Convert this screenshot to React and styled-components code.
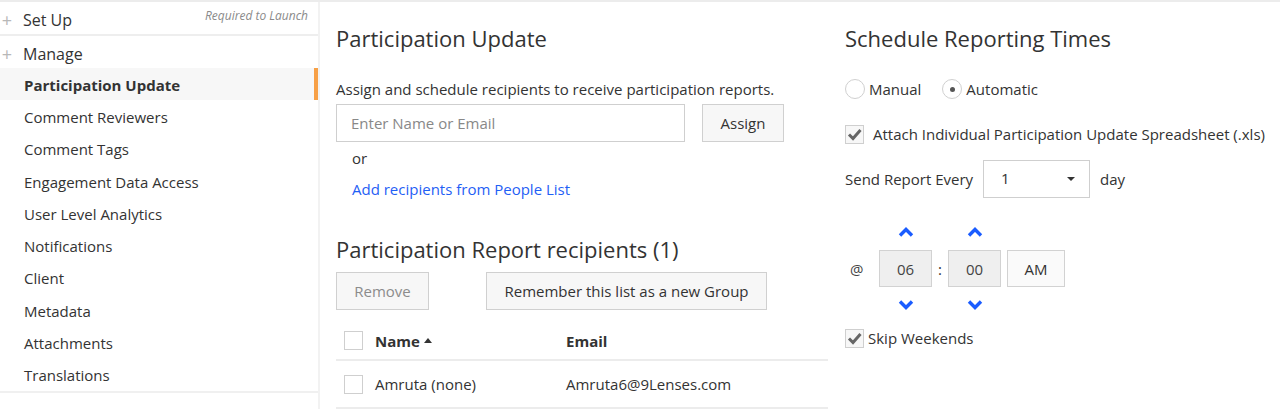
import styled, { createGlobalStyle } from "styled-components";

const GlobalStyle = createGlobalStyle`
  html, body {
    margin: 0;
    padding: 0;
    background: #fff;
  }
  body {
    font-family: "Open Sans", "Noto Sans", sans-serif;
    color: #333;
  }
`;

const navItems = [
  "Comment Reviewers",
  "Comment Tags",
  "Engagement Data Access",
  "User Level Analytics",
  "Notifications",
  "Client",
  "Metadata",
  "Attachments",
  "Translations",
];

function Chevron({ up }) {
  return (
    <svg width="16" height="10" viewBox="0 0 16 10">
      <polyline
        points={up ? "2,8.5 8,2.5 14,8.5" : "2,1.5 8,7.5 14,1.5"}
        fill="none"
        stroke="#1a5cff"
        strokeWidth="3.4"
      />
    </svg>
  );
}

function Check() {
  return (
    <svg width="15" height="13" viewBox="0 0 15 13">
      <polyline
        points="2,6.5 6,10.5 13.5,2"
        fill="none"
        stroke="#666"
        strokeWidth="3"
      />
    </svg>
  );
}

export default function App() {
  return (
    <>
      <GlobalStyle />
      <Page>
        <Sidebar>
          <SectionRow $border>
            <Plus>+</Plus>
            <SectionTitle>Set Up</SectionTitle>
            <Required>Required to Launch</Required>
          </SectionRow>
          <SectionRow>
            <Plus>+</Plus>
            <SectionTitle>Manage</SectionTitle>
          </SectionRow>
          <NavList>
            <NavItem $active>Participation Update</NavItem>
            {navItems.map((label) => (
              <NavItem key={label}>{label}</NavItem>
            ))}
          </NavList>
        </Sidebar>

        <Main>
          <Heading>Participation Update</Heading>
          <Description>
            Assign and schedule recipients to receive participation reports.
          </Description>
          <AssignRow>
            <TextInput placeholder="Enter Name or Email" />
            <Button $width="82px">Assign</Button>
          </AssignRow>
          <Or>or</Or>
          <Link href="#">Add recipients from People List</Link>

          <Heading $top="35px">Participation Report recipients (1)</Heading>
          <ButtonRow>
            <Button $width="93px" $disabled>
              Remove
            </Button>
            <Button $width="281px">Remember this list as a new Group</Button>
          </ButtonRow>

          <Table>
            <HeadRow>
              <NameCell>
                <Box />
                <HeadText>Name</HeadText>
                <SortCaret />
              </NameCell>
              <HeadText>Email</HeadText>
            </HeadRow>
            <BodyRow>
              <NameCell>
                <Box />
                <span>Amruta (none)</span>
              </NameCell>
              <span>Amruta6@9Lenses.com</span>
            </BodyRow>
          </Table>
        </Main>

        <Schedule>
          <Heading>Schedule Reporting Times</Heading>
          <RadioRow>
            <RadioLabel>
              <Radio />
              Manual
            </RadioLabel>
            <RadioLabel>
              <Radio $checked />
              Automatic
            </RadioLabel>
          </RadioRow>
          <CheckRow $gap="9px" $top="25px">
            <Box $checked>
              <Check />
            </Box>
            Attach Individual Participation Update Spreadsheet (.xls)
          </CheckRow>
          <EveryRow>
            Send Report Every
            <Select>
              <span>1</span>
              <Caret />
            </Select>
            day
          </EveryRow>

          <TimeRow>
            <At>@</At>
            <Spinner>
              <Chevron up />
              <TimeBox>06</TimeBox>
              <Chevron />
            </Spinner>
            <Colon>:</Colon>
            <Spinner>
              <Chevron up />
              <TimeBox>00</TimeBox>
              <Chevron />
            </Spinner>
            <AmBox>AM</AmBox>
          </TimeRow>

          <CheckRow $gap="4px" $top="18px">
            <Box $checked>
              <Check />
            </Box>
            Skip Weekends
          </CheckRow>
        </Schedule>
      </Page>
    </>
  );
}

// ── Layout ────────────────────────────────────────────────────────────────────

const Page = styled.div`
  display: flex;
  height: 409px;
  border-top: 2px solid #ececec;
  box-sizing: border-box;
  overflow: hidden;
`;

// ── Sidebar ───────────────────────────────────────────────────────────────────

const Sidebar = styled.aside`
  width: 318px;
  flex-shrink: 0;
  border-right: 2px solid #f2f2f2;
  align-self: stretch;
`;

const SectionRow = styled.div`
  display: flex;
  align-items: center;
  height: 29px;
  padding-top: 3px;
  border-bottom: ${({ $border }) => ($border ? "2px solid #eeeeee" : "none")};
  position: relative;
`;

const Plus = styled.span`
  width: 14px;
  text-align: center;
  margin-right: 9px;
  font-size: 18px;
  color: #b8b8b8;
  line-height: 1;
`;

const SectionTitle = styled.span`
  font-size: 16px;
  color: #333;
`;

const Required = styled.span`
  position: absolute;
  right: 10px;
  top: 5px;
  font-size: 12px;
  font-style: italic;
  color: #8a8a8a;
`;

const NavList = styled.div`
  display: flex;
  flex-direction: column;
  border-bottom: 2px solid #f0f0f0;
`;

const NavItem = styled.div`
  height: 32.3px;
  display: flex;
  align-items: center;
  padding-left: 24px;
  padding-top: 1px;
  font-size: 15px;
  font-weight: ${({ $active }) => ($active ? 700 : 400)};
  color: #333;
  background: ${({ $active }) => ($active ? "#f7f7f7" : "transparent")};
  border-right: 4px solid ${({ $active }) => ($active ? "#f7a046" : "transparent")};
  box-sizing: border-box;
`;

// ── Main column ───────────────────────────────────────────────────────────────

const Main = styled.main`
  width: 492px;
  margin-left: 16px;
  flex-shrink: 0;
  display: flex;
  flex-direction: column;
  align-items: flex-start;
`;

const Heading = styled.h2`
  margin: ${({ $top }) => $top || "21px"} 0 0;
  font-size: 22px;
  font-weight: 400;
  line-height: 30px;
  color: #333;
`;

const Description = styled.p`
  margin: 26px 0 0;
  font-size: 15px;
  line-height: 20px;
`;

const AssignRow = styled.div`
  display: flex;
  gap: 17px;
  margin-top: 5px;
`;

const TextInput = styled.input`
  width: 349px;
  height: 38px;
  box-sizing: border-box;
  border: 1px solid #cfcfcf;
  padding: 0 14px;
  font-family: inherit;
  font-size: 15px;
  color: #333;
  outline: none;

  &::placeholder {
    color: #888;
  }
`;

const Button = styled.button`
  width: ${({ $width }) => $width};
  height: 38px;
  box-sizing: border-box;
  border: 1px solid #d0d0d0;
  background: #f7f7f7;
  font-family: inherit;
  font-size: 15px;
  color: ${({ $disabled }) => ($disabled ? "#8c8c8c" : "#333")};
  padding: 0;
`;

const Or = styled.div`
  margin: 6px 0 0 16px;
  font-size: 15px;
  line-height: 20px;
`;

const Link = styled.a`
  margin: 11px 0 0 16px;
  font-size: 15px;
  line-height: 20px;
  color: #1f60f5;
  text-decoration: none;
`;

const ButtonRow = styled.div`
  display: flex;
  gap: 57px;
  margin-top: 8px;
`;

const Table = styled.div`
  align-self: stretch;
  margin-top: 12px;
  font-size: 15px;
`;

const HeadRow = styled.div`
  display: flex;
  align-items: center;
  height: 37px;
  border-bottom: 2px solid #ececec;
`;

const BodyRow = styled.div`
  display: flex;
  align-items: center;
  height: 46px;
  border-bottom: 2px solid #ececec;
`;

const NameCell = styled.div`
  width: 230px;
  display: flex;
  align-items: center;
  padding-left: 8px;
  box-sizing: border-box;
  gap: 12px;
`;

const HeadText = styled.span`
  font-weight: 700;
`;

const SortCaret = styled.span`
  width: 0;
  height: 0;
  margin-left: -8px;
  border-left: 4px solid transparent;
  border-right: 4px solid transparent;
  border-bottom: 5px solid #333;
`;

const Box = styled.span`
  width: 19px;
  height: 19px;
  box-sizing: border-box;
  border: 1px solid #cfcfcf;
  background: ${({ $checked }) => ($checked ? "#f7f7f7" : "#fff")};
  display: inline-flex;
  align-items: center;
  justify-content: center;
  flex-shrink: 0;
`;

// ── Schedule column ───────────────────────────────────────────────────────────

const Schedule = styled.section`
  margin-left: 17px;
  display: flex;
  flex-direction: column;
  align-items: flex-start;
  font-size: 15px;
`;

const RadioRow = styled.div`
  display: flex;
  gap: 21px;
  margin-top: 26px;
`;

const RadioLabel = styled.label`
  display: flex;
  align-items: center;
  gap: 4px;
  line-height: 20px;
`;

const Radio = styled.span`
  width: 20px;
  height: 20px;
  box-sizing: border-box;
  border-radius: 50%;
  border: 1px solid #d0d0d0;
  display: inline-flex;
  align-items: center;
  justify-content: center;

  &::after {
    content: "";
    width: 5px;
    height: 5px;
    border-radius: 50%;
    background: ${({ $checked }) => ($checked ? "#555" : "transparent")};
  }
`;

const CheckRow = styled.label`
  display: flex;
  align-items: center;
  gap: ${({ $gap }) => $gap};
  margin-top: ${({ $top }) => $top};
  line-height: 20px;
`;

const EveryRow = styled.div`
  display: flex;
  align-items: center;
  gap: 10px;
  margin-top: 16px;
`;

const Select = styled.div`
  width: 107px;
  height: 38px;
  box-sizing: border-box;
  border: 1px solid #cfcfcf;
  display: flex;
  align-items: center;
  justify-content: space-between;
  padding: 0 14px 3px 17px;
`;

const Caret = styled.span`
  width: 0;
  height: 0;
  border-left: 4px solid transparent;
  border-right: 4px solid transparent;
  border-top: 4px solid #333;
  margin-bottom: -2px;
`;

const TimeRow = styled.div`
  display: flex;
  align-items: center;
  margin-top: 29px;
`;

const At = styled.span`
  width: 34px;
  padding-left: 5px;
  box-sizing: border-box;
  color: #444;
`;

const Spinner = styled.div`
  display: flex;
  flex-direction: column;
  align-items: center;
  gap: 13px;
`;

const TimeBox = styled.div`
  width: 53px;
  height: 37px;
  box-sizing: border-box;
  border: 1px solid #d2d2d2;
  background: #efefef;
  display: flex;
  align-items: center;
  justify-content: center;
  color: #444;
`;

const Colon = styled.span`
  width: 16px;
  text-align: center;
`;

const AmBox = styled(TimeBox)`
  width: 58px;
  margin-left: 6px;
  background: #fafafa;
  color: #333;
`;
